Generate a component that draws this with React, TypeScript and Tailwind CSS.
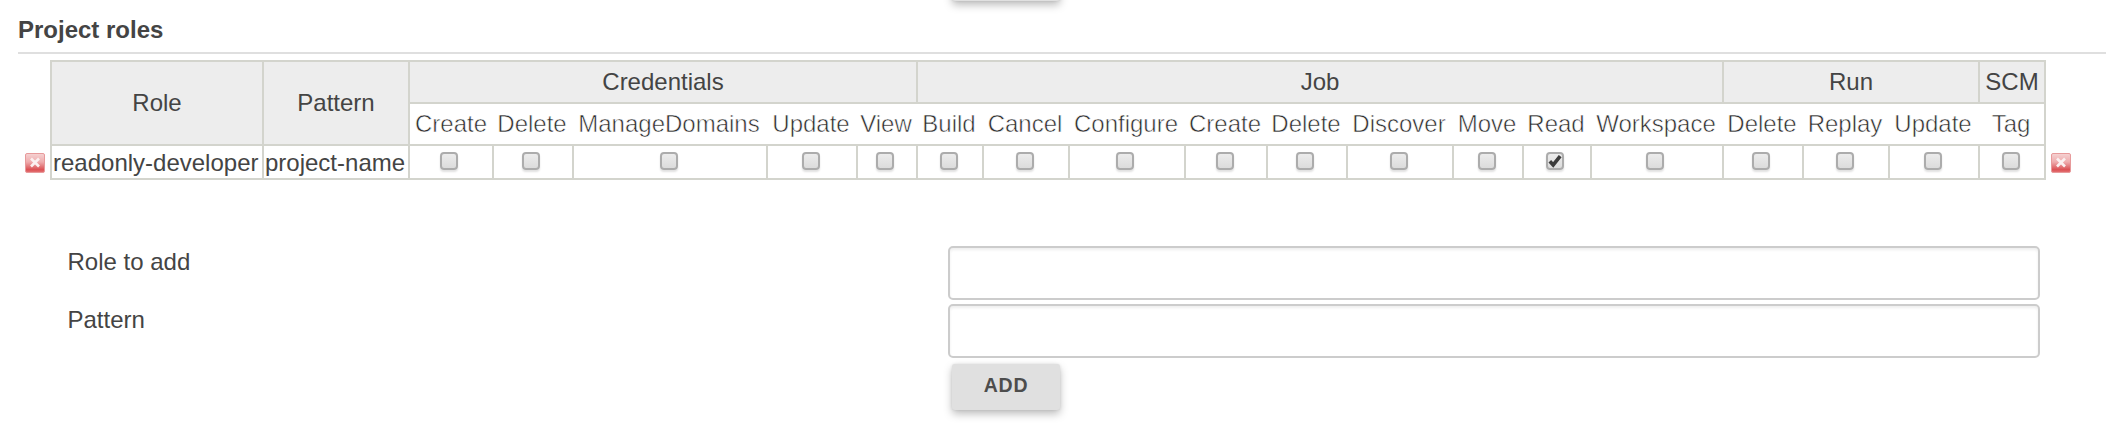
import React from 'react';

type Permission = { name: string; checked?: boolean; inset?: boolean };
type Group = { title: string; span: string; permissions: Permission[] };

const groups: Group[] = [
  {
    title: 'Credentials',
    span: 'col-span-5',
    permissions: [
      { name: 'Create', inset: true },
      { name: 'Delete', inset: true },
      { name: 'ManageDomains' },
      { name: 'Update' },
      { name: 'View', inset: true },
    ],
  },
  {
    title: 'Job',
    span: 'col-span-9',
    permissions: [
      { name: 'Build' },
      { name: 'Cancel' },
      { name: 'Configure', inset: true },
      { name: 'Create' },
      { name: 'Delete', inset: true },
      { name: 'Discover' },
      { name: 'Move' },
      { name: 'Read', checked: true, inset: true },
      { name: 'Workspace', inset: true },
    ],
  },
  {
    title: 'Run',
    span: 'col-span-3',
    permissions: [{ name: 'Delete', inset: true }, { name: 'Replay' }, { name: 'Update' }],
  },
  { title: 'SCM', span: 'col-span-1', permissions: [{ name: 'Tag' }] },
];

const permissions = groups.flatMap((g) => g.permissions);

function RemoveIcon() {
  return (
    <svg className="block h-5 w-5 shrink-0" viewBox="0 0 20 20">
      <defs>
        <linearGradient id="removeFill" x1="0" y1="0" x2="0" y2="1">
          <stop offset="0" stopColor="#f5d3d3" />
          <stop offset="0.45" stopColor="#efabac" />
          <stop offset="0.6" stopColor="#e68a8c" />
          <stop offset="0.85" stopColor="#dc5154" />
          <stop offset="1" stopColor="#e47476" />
        </linearGradient>
      </defs>
      <rect x="0.5" y="0.5" width="19" height="19" rx="1.5" fill="url(#removeFill)" stroke="#e79a9b" />
      <path d="M6 5.5L14 13.5M14 5.5L6 13.5" stroke="#fbf0f0" strokeWidth="2.6" fill="none" />
    </svg>
  );
}

function Checkbox({ checked, inset }: { checked?: boolean; inset?: boolean }) {
  return (
    <span
      role="checkbox"
      aria-checked={!!checked}
      className={`${
        inset ? 'mr-1' : 'mr-0.5'
      } flex h-[18px] w-[18px] items-center justify-center rounded-[4px] border-2 border-[#acacac] bg-linear-to-b from-[#ececec] to-[#dcdcdc] shadow-[0_2px_2px_rgba(0,0,0,0.12)]`}
    >
      {checked && (
        <svg className="block h-[14px] w-[14px] shrink-0" viewBox="0 0 14 14">
          <path d="M1.8 7.2L5.2 10.9L12.2 2.2" fill="none" stroke="#3c3c3c" strokeWidth="3.6" />
        </svg>
      )}
    </span>
  );
}

function Field({ label }: { label: string }) {
  return (
    <div className="flex h-[58px]">
      <label className="w-[881px] pt-[3px] pl-[0.5px] leading-[26px]">{label}</label>
      <input
        aria-label={label}
        className="h-[54px] w-[1092px] rounded-[5px] border-2 border-[#cccccc] bg-white shadow-[inset_0_2px_3px_rgba(0,0,0,0.07)] outline-none"
      />
    </div>
  );
}

const buttonLook =
  'ml-[952px] w-[108px] rounded-[3px] bg-[#e0e0e0] shadow-[0_4px_8px_rgba(0,0,0,0.26),0_0_3px_rgba(0,0,0,0.1)]';

export default function App() {
  return (
    <div className="h-[430px] w-[2106px] overflow-hidden bg-white font-['Liberation_Sans',Arial,sans-serif] text-[24px] text-[#444444]">
      <div className={`${buttonLook} -mt-[45px] h-[46px]`} />
      <h2 className="ml-[18px] h-[53px] border-b-2 border-[#dfdfdf] pt-[13px] text-[24px] leading-[32px] font-bold">
        Project roles
      </h2>
      <div className="mt-[6px] flex items-end">
        <div className="mb-[7px] w-[50px] pl-[25px]">
          <RemoveIcon />
        </div>
        <div className="grid w-[1996px] grid-cols-[212px_146px_84px_80px_194px_90px_60px_66px_86px_116px_82px_80px_106px_70px_68px_132px_80px_86px_90px_66px] grid-rows-[42px_42px_34px] border-r-2 border-b-2 border-[#d3d4cd] whitespace-nowrap">
          <div className="row-span-2 flex items-center justify-center border-t-2 border-l-2 border-[#d3d4cd] bg-[#ededed]">Role</div>
          <div className="row-span-2 flex items-center justify-center border-t-2 border-l-2 border-[#d3d4cd] bg-[#ededed]">
            Pattern
          </div>
          {groups.map((g) => (
            <div
              key={g.title}
              className={`${g.span} flex items-center justify-center border-t-2 border-l-2 border-[#d3d4cd] bg-[#ededed]`}
            >
              {g.title}
            </div>
          ))}
          {permissions.map((p, i) => (
            <div
              key={i}
              className={`flex items-center justify-center border-t-2 border-[#d3d4cd] text-[#2c2c2c] [-webkit-text-stroke:0.55px_white] ${
                i === 0 ? 'border-l-2' : ''
              }`}
            >
              {p.name}
            </div>
          ))}
          <div className="flex items-center border-t-2 border-l-2 border-[#d3d4cd] pt-px pl-[1px]">readonly-developer</div>
          <div className="flex items-center border-t-2 border-l-2 border-[#d3d4cd] pt-px pl-[1px]">project-name</div>
          {permissions.map((p, i) => (
            <div key={i} className="flex justify-center border-t-2 border-l-2 border-[#d3d4cd] pt-[6px]">
              <Checkbox checked={p.checked} inset={p.inset} />
            </div>
          ))}
        </div>
        <div className="mb-[7px] ml-[5px]">
          <RemoveIcon />
        </div>
      </div>
      <div className="mt-[66px] pl-[67px]">
        <Field label="Role to add" />
        <Field label="Pattern" />
      </div>
      <button
        type="button"
        className={`${buttonLook} mt-[2px] block h-[46px] pb-[3px] text-[19.5px] font-bold tracking-[0.8px] text-[#4d4d4d]`}
      >
        ADD
      </button>
    </div>
  );
}
